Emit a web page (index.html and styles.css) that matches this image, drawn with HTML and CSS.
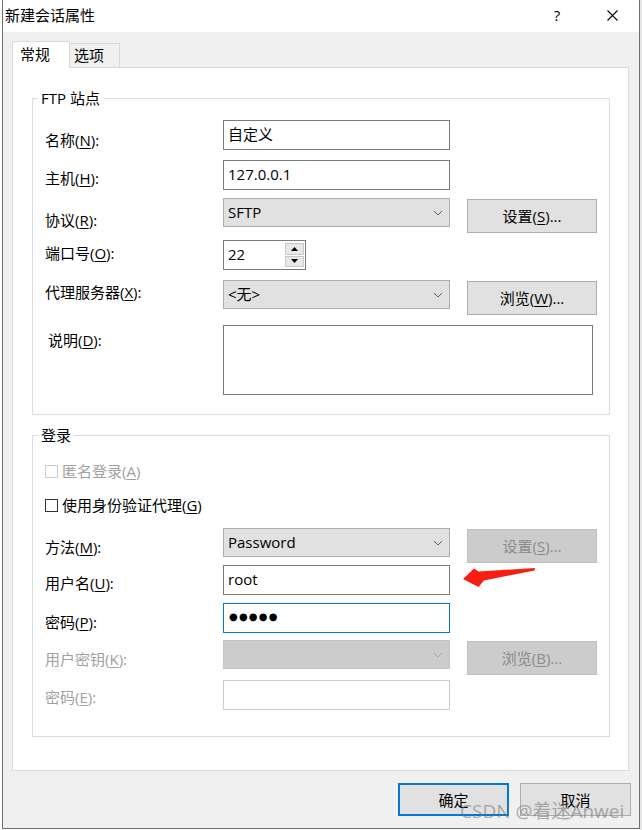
FILE: index.html
```html
<!DOCTYPE html>
<html lang="zh-CN">
<head>
<meta charset="utf-8">
<title>新建会话属性</title>
<link rel="stylesheet" href="styles.css">
</head>
<body>
<div class="screen">
  <div class="edge-left"></div>
  <div class="win">
    <div class="titlebar">
      <span class="title">新建会话属性</span>
      <span class="help">?</span>
      <span class="close"><svg width="11" height="11" viewBox="0 0 11 11"><path d="M0.5 0.5 L10.5 10.5 M10.5 0.5 L0.5 10.5" stroke="#000" stroke-width="1.1" fill="none"/></svg></span>
    </div>
    <div class="body">
      <div class="tabs">
        <div class="tab active">常规</div>
        <div class="tab">选项</div>
      </div>
      <div class="panel">
        <div class="group g1">
          <div class="legend">FTP 站点</div>
          <div class="row h40">
            <label class="lbl o10">名称(<u>N</u>):</label>
            <div class="input">自定义</div>
          </div>
          <div class="row h38">
            <label class="lbl o8">主机(<u>H</u>):</label>
            <div class="input">127.0.0.1</div>
          </div>
          <div class="row h42">
            <label class="lbl o12">协议(<u>R</u>):</label>
            <div class="select"><span class="val">SFTP</span><svg class="chev" width="10" height="6" viewBox="0 0 10 6"><path d="M1 1 L5 5 L9 1" stroke="#606060" fill="none"/></svg></div>
            <button class="btn side">设置(<u>S</u>)...</button>
          </div>
          <div class="row h40">
            <label class="lbl o3">端口号(<u>O</u>):</label>
            <div class="spinner">
              <span class="val">22</span>
              <div class="spin">
                <div class="sbtn"><svg width="7" height="4" viewBox="0 0 7 4"><path d="M3.5 0 L7 4 L0 4 Z" fill="#000"/></svg></div>
                <div class="sbtn"><svg width="7" height="4" viewBox="0 0 7 4"><path d="M0 0 L7 0 L3.5 4 Z" fill="#000"/></svg></div>
              </div>
            </div>
          </div>
          <div class="row h45">
            <label class="lbl o2">代理服务器(<u>X</u>):</label>
            <div class="select"><span class="val">&lt;无&gt;</span><svg class="chev" width="10" height="6" viewBox="0 0 10 6"><path d="M1 1 L5 5 L9 1" stroke="#606060" fill="none"/></svg></div>
            <button class="btn side">浏览(<u>W</u>)...</button>
          </div>
          <div class="row h70">
            <label class="lbl o5 ind">说明(<u>D</u>):</label>
            <div class="textarea"></div>
          </div>
        </div>

        <div class="group g2">
          <div class="legend">登录</div>
          <div class="row h34">
            <div class="check disabled"><span class="box"></span><span>匿名登录(<u>A</u>)</span></div>
          </div>
          <div class="row h33">
            <div class="check"><span class="box"></span><span>使用身份验证代理(<u>G</u>)</span></div>
          </div>
          <div class="row h37">
            <label class="lbl o9">方法(<u>M</u>):</label>
            <div class="select"><span class="val">Password</span><svg class="chev" width="10" height="6" viewBox="0 0 10 6"><path d="M1 1 L5 5 L9 1" stroke="#606060" fill="none"/></svg></div>
            <button class="btn side disabled">设置(<u>S</u>)...</button>
          </div>
          <div class="row h38">
            <label class="lbl o8">用户名(<u>U</u>):</label>
            <div class="input">root</div>
          </div>
          <div class="row h37">
            <label class="lbl o9">密码(<u>P</u>):</label>
            <div class="input focus"><span class="dots">●●●●●</span></div>
          </div>
          <div class="row h40">
            <label class="lbl o9 dim">用户密钥(<u>K</u>):</label>
            <div class="select disabled"><span class="val"></span><svg class="chev" width="10" height="6" viewBox="0 0 10 6"><path d="M1 1 L5 5 L9 1" stroke="#a8a8a8" fill="none"/></svg></div>
            <button class="btn side disabled">浏览(<u>B</u>)...</button>
          </div>
          <div class="row h30">
            <label class="lbl o7 dim">密码(<u>E</u>):</label>
            <div class="input disabled"></div>
          </div>
        </div>
      </div>
      <div class="footer">
        <button class="btn big default">确定</button>
        <button class="btn big">取消</button>
      </div>
    </div>
  </div>
  <div class="edge-right"></div>
</div>
<svg class="arrow" width="80" height="26" viewBox="0 0 80 26">
  <path d="M3 14 L14 3.5 L18.5 6.5 L75 3 L74.5 5.5 L24 15.5 L18.5 22 Z" fill="#f81e12"/>
</svg>
<div class="watermark">CSDN @着迷Anwei</div>
</body>
</html>
```

FILE: styles.css
```css
* { box-sizing: border-box; }

html, body {
  margin: 0;
  padding: 0;
  background: #ffffff;
}

body {
  width: 642px;
  height: 830px;
  overflow: hidden;
  position: relative;
  font-family: "Open Sans", "Noto Sans CJK SC", sans-serif;
  font-size: 15px;
  line-height: 20px;
  color: #000;
}

u { text-underline-offset: 2px; text-decoration-thickness: 1px; }

.screen {
  display: flex;
  height: 830px;
}

.edge-left {
  width: 2px;
  background: #ffffff;
}

.edge-right {
  width: 2px;
  background: #e6e6e6;
}

.win {
  width: 638px;
  height: 829px;
  border: 1px solid #6e6e6e;
  border-top: none;
  background: #f0f0f0;
  display: flex;
  flex-direction: column;
}

.titlebar {
  height: 32px;
  background: #ffffff;
  display: flex;
  align-items: center;
  padding-left: 2px;
  padding-bottom: 2px;
  flex: none;
}

.title { font-size: 15px; }

.help {
  margin-left: auto;
  width: 20px;
  text-align: center;
  font-size: 15px;
}

.close {
  width: 46px;
  margin-left: 22px;
  margin-right: 4px;
  display: flex;
  justify-content: center;
  align-items: center;
}

.body {
  flex: 1;
  padding: 9px 8px 0 9px;
}

.tabs {
  display: flex;
  align-items: flex-end;
  height: 26px;
  position: relative;
  z-index: 1;
}

.tab {
  height: 24px;
  width: 50px;
  border: 1px solid #d9d9d9;
  border-left: none;
  border-bottom: none;
  background: #f0f0f0;
  padding-left: 4px;
  line-height: 23px;
}

.tab.active {
  height: 27px;
  width: 58px;
  margin-bottom: -1px;
  border-left: 1px solid #d9d9d9;
  background: #ffffff;
  padding-left: 7px;
  line-height: 25px;
}

.panel {
  width: 617px;
  height: 704px;
  background: #ffffff;
  border: 1px solid #d9d9d9;
  padding: 30px 0 0 19px;
}

.group {
  position: relative;
  width: 578px;
  border: 1px solid #dcdcdc;
  padding-left: 12px;
}

.g1 { padding-top: 21px; padding-bottom: 19px; }
.g2 { padding-top: 25px; padding-bottom: 26px; margin-top: 20px; }

.legend {
  position: absolute;
  top: -11px;
  left: 5px;
  padding: 0 3px;
  background: #ffffff;
  line-height: 20px;
}

.row {
  display: flex;
  align-items: flex-start;
}

.h30 { height: 30px; }
.h33 { height: 33px; }
.h34 { height: 34px; }
.h37 { height: 37px; }
.h38 { height: 38px; }
.h40 { height: 40px; }
.h42 { height: 42px; }
.h45 { height: 45px; }
.h70 { height: 70px; }

.lbl {
  width: 178px;
  flex: none;
  line-height: 20px;
}

.o2 { padding-top: 2px; }
.o3 { padding-top: 3px; }
.o5 { padding-top: 5px; }
.o7 { padding-top: 7px; }
.o8 { padding-top: 8px; }
.o9 { padding-top: 9px; }
.o10 { padding-top: 10px; }
.o12 { padding-top: 12px; }

.ind { padding-left: 3px; }
.dim { color: #a0a0a0; }

.input {
  width: 227px;
  height: 30px;
  border: 1px solid #7a7a7a;
  background: #ffffff;
  padding: 0 4px 2px 4px;
  display: flex;
  align-items: center;
  flex: none;
}

.input.focus { border-color: #0078d7; }
.input.disabled { border-color: #cccccc; }

.dots {
  font-family: "DejaVu Sans", sans-serif;
  font-size: 10px;
  letter-spacing: 1.2px;
  padding-left: 1px;
}

.select {
  width: 227px;
  height: 29px;
  background: #e1e1e1;
  border: 1px solid #adadad;
  padding: 0 6px 2px 4px;
  display: flex;
  align-items: center;
  flex: none;
}

.select .val { flex: 1; }
.select .chev { margin-top: 2px; }
.select.disabled { background: #cccccc; border-color: #c4c4c4; }

.btn {
  font-family: inherit;
  font-size: 15px;
  line-height: 20px;
  color: #000;
  background: #e1e1e1;
  border: 1px solid #adadad;
  padding: 0;
  margin: 0;
}

.btn.side {
  width: 130px;
  height: 34px;
  margin-left: 17px;
  margin-top: 1px;
}

.btn.disabled {
  background: #cccccc;
  border-color: #bfbfbf;
  color: #8a8a8a;
}

.spinner {
  width: 83px;
  height: 30px;
  border: 1px solid #7a7a7a;
  background: #ffffff;
  display: flex;
  align-items: stretch;
  flex: none;
}

.spinner .val {
  flex: 1;
  padding-left: 4px;
  padding-bottom: 2px;
  display: flex;
  align-items: center;
}

.spin {
  width: 19px;
  margin: 2px 1px 2px 0;
  display: flex;
  flex-direction: column;
  gap: 1px;
}

.sbtn {
  flex: 1;
  background: #e8e8e8;
  border: 1px solid #c8c8c8;
  display: flex;
  align-items: center;
  justify-content: center;
}

.textarea {
  width: 370px;
  height: 70px;
  border: 1px solid #7a7a7a;
  background: #ffffff;
  flex: none;
}

.check {
  display: flex;
  align-items: center;
  height: 20px;
}

.check .box {
  width: 13px;
  height: 13px;
  border: 1px solid #333333;
  background: #ffffff;
  margin-right: 4px;
}

.check.disabled { color: #a0a0a0; }
.check.disabled .box { border-color: #cccccc; }

.footer {
  display: flex;
  justify-content: flex-end;
  gap: 11px;
  margin-top: 12px;
}

.btn.big {
  width: 111px;
  height: 33px;
}

.btn.default {
  border: 2px solid #0078d7;
}

.arrow {
  position: absolute;
  left: 460px;
  top: 565px;
}

.watermark {
  position: absolute;
  left: 460px;
  top: 799px;
  font-size: 19px;
  line-height: 24px;
  color: rgba(110, 110, 110, 0.55);
  white-space: nowrap;
}
```
